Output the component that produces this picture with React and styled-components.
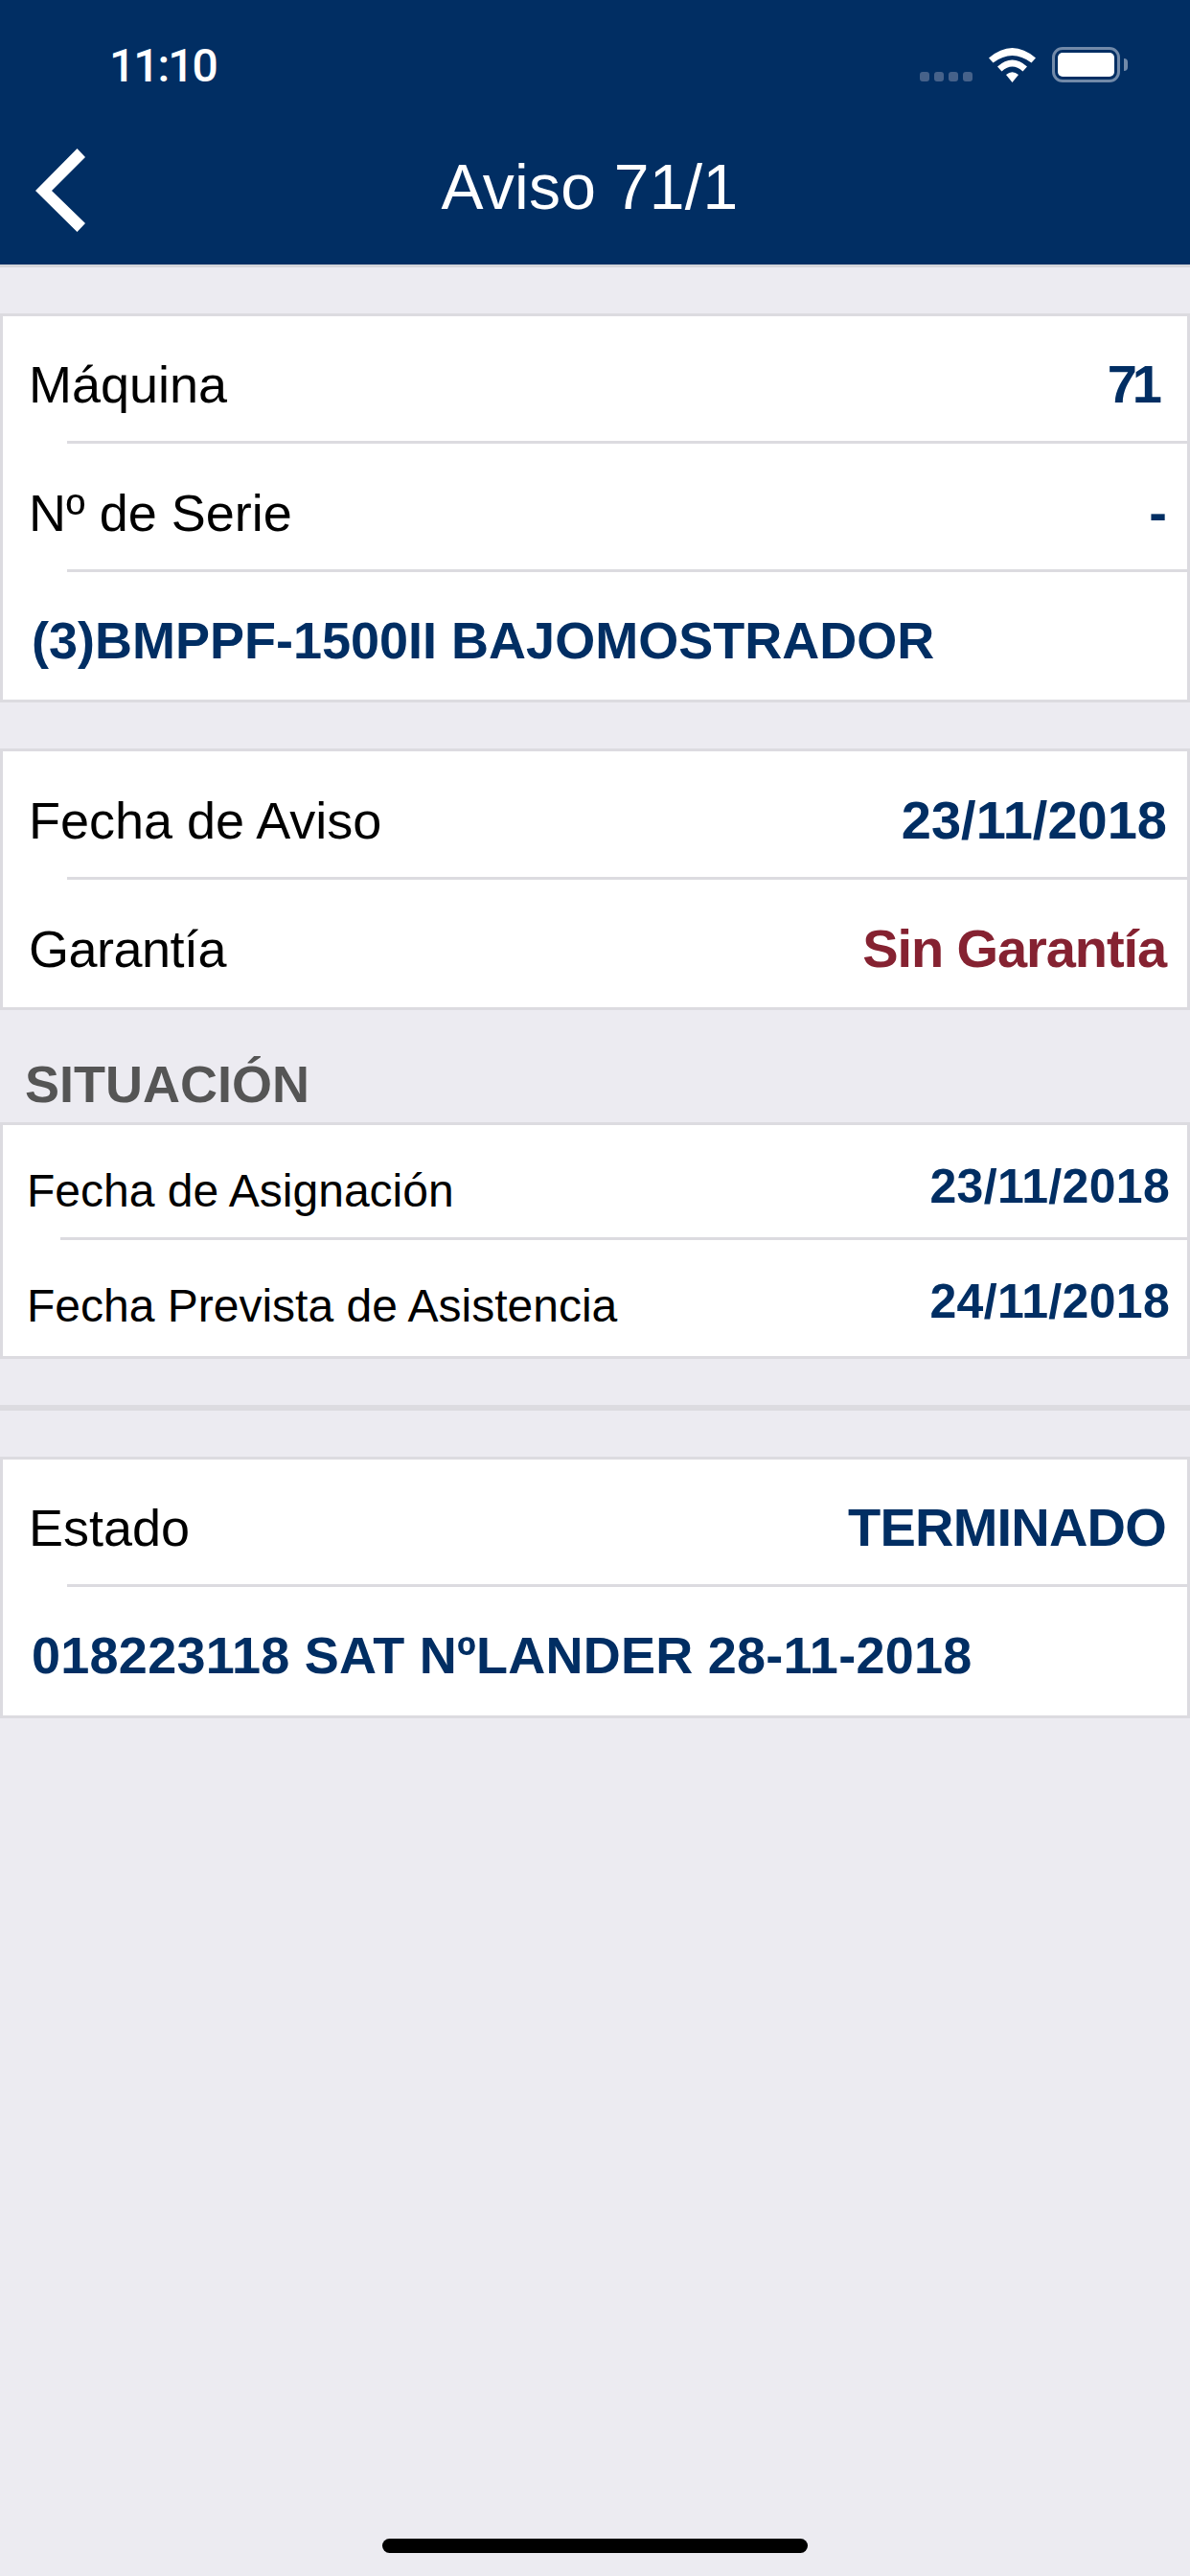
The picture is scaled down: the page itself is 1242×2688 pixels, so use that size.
import React from "react";
import styled, {createGlobalStyle} from "styled-components";

const GlobalStyle = createGlobalStyle`
    html, body {
        margin: 0;
        padding: 0;
    }
    body {
        font-family: "Liberation Sans", Arial, sans-serif;
        background: #ecebf1;
    }
`;

const Page = styled.div`
    width: 1242px;
    height: 2688px;
    display: flex;
    flex-direction: column;
    background: #ecebf1;
    overflow: hidden;
`;

const Header = styled.header`
    height: 276px;
    flex-shrink: 0;
    display: flex;
    flex-direction: column;
    background: #012e63;
    border-bottom: 3px solid #d5d5da;
`;

const StatusBar = styled.div`
    height: 132px;
    box-sizing: border-box;
    display: flex;
    align-items: flex-start;
    justify-content: space-between;
    padding: 45px 65px 0 114px;
`;

const Time = styled.span`
    font-family: Roboto, "Liberation Sans", sans-serif;
    font-size: 48px;
    line-height: 48px;
    font-weight: 500;
    letter-spacing: -2px;
    color: #fff;
`;

const StatusIcons = styled.div`
    display: flex;
    align-items: flex-end;
    margin-top: 4px;
`;

const Signal = styled.div`
    display: flex;
    gap: 5px;
    margin: 0 17px 1px 0;
`;

const SignalDot = styled.span`
    width: 10px;
    height: 10px;
    border-radius: 3px;
    background: #46628a;
`;

const WifiIcon = styled.svg`
    display: block;
    width: 49px;
    height: 36px;
    margin-right: 17px;
`;

const Battery = styled.div`
    display: flex;
    align-items: center;
`;

const BatteryBody = styled.div`
    width: 71px;
    height: 37px;
    box-sizing: border-box;
    padding: 3px;
    border: 3px solid #728aa9;
    border-radius: 11px;
`;

const BatteryFill = styled.div`
    width: 100%;
    height: 100%;
    border-radius: 5px;
    background: #fff;
`;

const BatteryCap = styled.div`
    width: 4px;
    height: 13px;
    margin-left: 4px;
    border-radius: 0 4px 4px 0;
    background: #728aa9;
`;

const Nav = styled.nav`
    flex: 1;
    display: grid;
    grid-template-columns: 1fr auto 1fr;
    align-items: center;
    padding: 0 48px 12px 37px;
`;

const BackIcon = styled.svg`
    display: block;
    width: 52px;
    height: 87px;
`;

const Title = styled.h1`
    margin: 0 0 6px;
    font-size: 66px;
    line-height: 76px;
    font-weight: 400;
    letter-spacing: 0.3px;
    color: #fff;
`;

const Content = styled.main`
    flex: 1;
`;

const Card = styled.section`
    margin-top: ${props => (props.$flush ? "0" : "48px")};
    border: 3px solid #dcdbe0;
    background: #fff;
`;

const Row = styled.div`
    height: ${props => props.$height}px;
    box-sizing: border-box;
    display: flex;
    align-items: center;
    justify-content: space-between;
    padding: ${props => props.$top}px 21px 0 27px;
`;

const SmallRow = styled(Row)`
    padding: ${props => props.$top}px 18px 0 25px;
`;

const Divider = styled.div`
    height: 3px;
    margin-left: ${props => props.$inset}px;
    background: #dcdbe0;
`;

const Label = styled.span`
    font-size: 54px;
    line-height: 62px;
    letter-spacing: ${props => props.$tracking || 0}px;
    color: #000;
`;

const SmallLabel = styled.span`
    font-size: 48px;
    line-height: 56px;
    color: #000;
`;

const Value = styled.span`
    font-size: 56px;
    line-height: 62px;
    font-weight: 700;
    letter-spacing: ${props => props.$tracking || 0}px;
    margin-right: ${props => props.$end || 0}px;
    color: ${props => props.$color || "#012e63"};
`;

const SmallValue = styled.span`
    font-size: 50px;
    line-height: 56px;
    font-weight: 700;
    letter-spacing: 0.3px;
    margin-bottom: 10px;
    color: #012e63;
`;

const Description = styled.span`
    font-size: 54px;
    line-height: 62px;
    font-weight: 700;
    letter-spacing: ${props => props.$tracking || 0}px;
    margin-left: 3px;
    color: #012e63;
`;

const SectionTitle = styled.h2`
    height: 117px;
    box-sizing: border-box;
    margin: 0;
    padding: 47px 0 0 26px;
    font-size: 54px;
    line-height: 60px;
    font-weight: 700;
    color: #555;
`;

const Separator = styled.div`
    height: 6px;
    margin-top: 48px;
    background: #dcdbe0;
`;

const HomeIndicator = styled.div`
    width: 444px;
    height: 15px;
    flex-shrink: 0;
    margin: 0 auto 24px;
    border-radius: 8px;
    background: #000;
`;

const App = () => (
    <Page>
        <GlobalStyle/>
        <Header>
            <StatusBar>
                <Time>11:10</Time>
                <StatusIcons>
                    <Signal>
                        <SignalDot/>
                        <SignalDot/>
                        <SignalDot/>
                        <SignalDot/>
                    </Signal>
                    <WifiIcon viewBox="0 0 49 36" fill="#fff">
                        <path d="M0 10.5Q24.5 -10.5 49 10.5L44.5 15.5Q24.5 0.5 4.5 15.5Z"/>
                        <path d="M9 19.5Q24.5 5.5 40 19.5L35.5 24.5Q24.5 14.5 13.5 24.5Z"/>
                        <path d="M18 28Q24.5 22.5 31 28L24.5 36Z"/>
                    </WifiIcon>
                    <Battery>
                        <BatteryBody>
                            <BatteryFill/>
                        </BatteryBody>
                        <BatteryCap/>
                    </Battery>
                </StatusIcons>
            </StatusBar>
            <Nav>
                <BackIcon viewBox="0 0 52 87" fill="#fff">
                    <polygon points="0,44 43.5,0 52,9 17,44 52,78 43.5,87"/>
                </BackIcon>
                <Title>Aviso 71/1</Title>
            </Nav>
        </Header>
        <Content>
            <Card>
                <Row $height={130} $top={12}>
                    <Label>Máquina</Label>
                    <Value $tracking={-5} $end={10}>71</Value>
                </Row>
                <Divider $inset={67}/>
                <Row $height={131} $top={12}>
                    <Label>Nº de Serie</Label>
                    <Value>-</Value>
                </Row>
                <Divider $inset={67}/>
                <Row $height={133} $top={8}>
                    <Description>(3)BMPPF-1500II BAJOMOSTRADOR</Description>
                </Row>
            </Card>
            <Card>
                <Row $height={131} $top={12}>
                    <Label>Fecha de Aviso</Label>
                    <Value>23/11/2018</Value>
                </Row>
                <Divider $inset={67}/>
                <Row $height={133} $top={10}>
                    <Label $tracking={-0.5}>Garantía</Label>
                    <Value $color="#852231" $tracking={-1.1} $end={1}>Sin Garantía</Value>
                </Row>
            </Card>
            <SectionTitle>SITUACIÓN</SectionTitle>
            <Card $flush>
                <SmallRow $height={117} $top={20}>
                    <SmallLabel>Fecha de Asignación</SmallLabel>
                    <SmallValue>23/11/2018</SmallValue>
                </SmallRow>
                <Divider $inset={60}/>
                <SmallRow $height={121} $top={16}>
                    <SmallLabel>Fecha Prevista de Asistencia</SmallLabel>
                    <SmallValue>24/11/2018</SmallValue>
                </SmallRow>
            </Card>
            <Separator/>
            <Card>
                <Row $height={130} $top={12}>
                    <Label>Estado</Label>
                    <Value $tracking={-0.8} $end={1}>TERMINADO</Value>
                </Row>
                <Divider $inset={67}/>
                <Row $height={134} $top={8}>
                    <Description $tracking={0.25}>018223118 SAT NºLANDER 28-11-2018</Description>
                </Row>
            </Card>
        </Content>
        <HomeIndicator/>
    </Page>
);

export default App;
